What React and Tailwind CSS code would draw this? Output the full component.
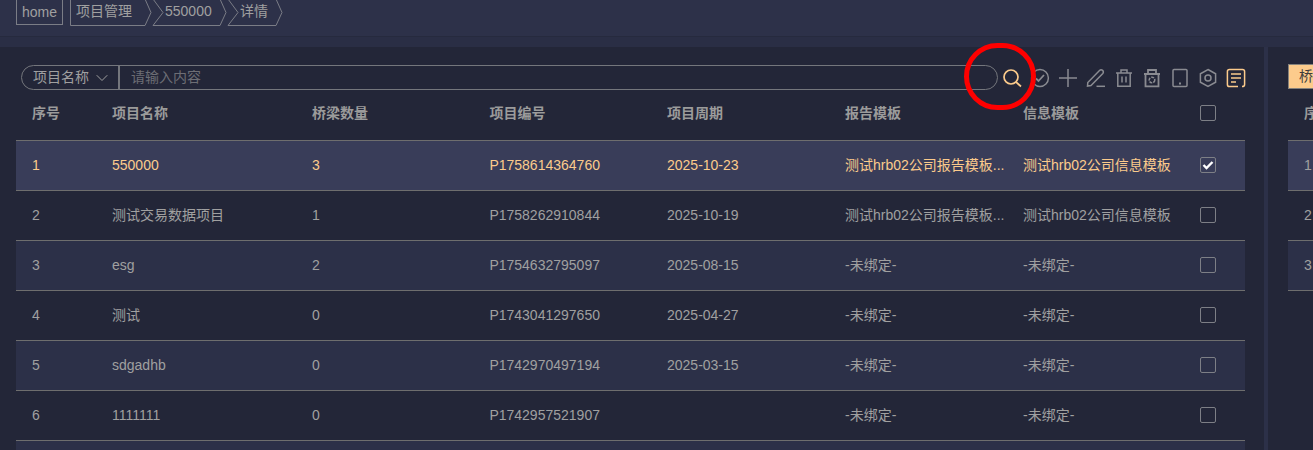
import React from 'react';
import { ChevronDown } from 'lucide-react';

const rows = [
  { no: 1, name: '550000', count: 3, code: 'P1758614364760', date: '2025-10-23', report: '测试hrb02公司报告模板...', info: '测试hrb02公司信息模板', active: true },
  { no: 2, name: '测试交易数据项目', count: 1, code: 'P1758262910844', date: '2025-10-19', report: '测试hrb02公司报告模板...', info: '测试hrb02公司信息模板' },
  { no: 3, name: 'esg', count: 2, code: 'P1754632795097', date: '2025-08-15', report: '-未绑定-', info: '-未绑定-' },
  { no: 4, name: '测试', count: 0, code: 'P1743041297650', date: '2025-04-27', report: '-未绑定-', info: '-未绑定-' },
  { no: 5, name: 'sdgadhb', count: 0, code: 'P1742970497194', date: '2025-03-15', report: '-未绑定-', info: '-未绑定-' },
  { no: 6, name: '1111111', count: 0, code: 'P1742957521907', date: '', report: '-未绑定-', info: '-未绑定-' },
];

const gridCols = 'grid grid-cols-[80px_200px_177.4px_177.6px_178px_178px_178px_59px]';

// outline of a breadcrumb tag, notch on the left when it follows another tag
const Crumb = ({ children, width, notch }) => (
  <div className="relative h-[26px] shrink-0" style={{ width }}>
    <svg className="absolute inset-0" width={width} height="26" fill="none" stroke="#7b7d86">
      <path d={`M${notch ? 1 : 0.5} -1 L${notch ? 11 : 0.5} ${notch ? 12.5 : 25} L${notch ? 1 : 0.5} 25.5 H${width - 7} L${width - 1} 12.5 L${width - 7} -1`} />
    </svg>
    <span className={`relative block leading-[22px] text-[14px] text-[#a0a0a0] ${notch ? 'pl-[13px]' : 'pl-[6px]'}`}>{children}</span>
  </div>
);

const Checkbox = ({ checked }) => (
  <div className="w-4 h-4 mb-px border border-[#7d7f86] rounded-[2px] flex items-center justify-center">
    {checked && (
      <svg width="12" height="10" viewBox="0 0 12 10" fill="none" stroke="#fff" strokeWidth="2.4">
        <path d="M1.5 5 L4.5 8 L10.5 2" />
      </svg>
    )}
  </div>
);

const ToolIcon = ({ children, color = '#8a8b91' }) => (
  <svg width="20" height="20" viewBox="0 0 20 20" fill="none" stroke={color} strokeWidth="1.5" className="shrink-0">
    {children}
  </svg>
);

const Toolbar = () => (
  <div className="flex items-center ml-1 gap-2">
    <ToolIcon color="#fccb8c">
      <circle cx="9" cy="9" r="7" strokeWidth="1.7" />
      <path d="M14 14 L19 18.5" strokeWidth="1.7" />
    </ToolIcon>
    <ToolIcon>
      <circle cx="10" cy="10" r="8.4" />
      <path d="M6 10.5 L8.5 13 L14 7" strokeWidth="1.8" />
    </ToolIcon>
    <ToolIcon>
      <path d="M10 1 V19 M1 10 H19" />
    </ToolIcon>
    <ToolIcon>
      <path d="M1.8 14.5 L1.5 18 L5 17.5 L16.8 5.5 Q18 3.8 16.6 2.4 Q15 1 13.5 2.5 Z" />
      <path d="M10.5 18.3 H19" />
    </ToolIcon>
    <ToolIcon>
      <path d="M2 5 H18 M7 5 V2 H13 V5 M3.8 5 V18.3 H16.2 V5 M8 8.5 V14.5 M12 8.5 V14.5" />
    </ToolIcon>
    <ToolIcon>
      <path d="M2 6 H18 M6 6 V2 H14 V6" strokeWidth="1.8" />
      <path d="M3.5 6 V18.3 H16.5 V6" strokeWidth="1.8" />
      <circle cx="10" cy="12" r="2.8" strokeDasharray="3 1" />
    </ToolIcon>
    <ToolIcon>
      <rect x="3" y="1.5" width="14" height="17" rx="1" />
      <path d="M9 15.5 H11" strokeWidth="2" />
    </ToolIcon>
    <ToolIcon>
      <path d="M10 1.5 L17.6 5.8 V14.2 L10 18.5 L2.4 14.2 V5.8 Z" />
      <circle cx="10" cy="10" r="3" />
    </ToolIcon>
    <ToolIcon color="#fccb8c">
      <path d="M12 18.6 H3.5 Q1.4 18.6 1.4 16.5 V3.5 Q1.4 1.4 3.5 1.4 H16.5 Q18.6 1.4 18.6 3.5 V16.5 Q18.6 18.6 16 18.6" />
      <path d="M5 6 H15 M5 10 H15 M5 14 H10" strokeWidth="1.6" />
    </ToolIcon>
  </div>
);

const App = () => {
  return (
    <div className="relative w-[1313px] h-[450px] overflow-hidden bg-[#2c3048] text-[14px] antialiased font-['Liberation_Sans','Noto_Sans_CJK_SC',sans-serif]">
      {/* Breadcrumb */}
      <div className="h-[36px] flex pl-4 bg-[#2d3149]">
        <div className="w-[47px] h-[26px] -mt-px border border-[#7b7d86] pl-[5px] leading-[24px] text-[#a0a0a0] shrink-0">home</div>
        <div className="w-[7px] shrink-0" />
        <Crumb width={82}>项目管理</Crumb>
        <Crumb width={75} notch>550000</Crumb>
        <Crumb width={56} notch>详情</Crumb>
      </div>
      <div className="h-[11px] bg-[#2a2e45] border-t border-[#262a3e]" />

      <div className="flex h-[403px]">
        {/* Project list */}
        <div className="w-[1264px] shrink-0 bg-[#232638] pl-4 pt-[18px]">
          <div className="flex items-center w-[1230px] h-[25px] pl-[5px]">
            <div className="flex flex-1 h-[25px] border border-[#74767c] rounded-full">
              <div className="w-[98px] shrink-0 flex items-center pl-[11px] border-r-2 border-[#74767c] text-[#a0a0a0]">
                项目名称
                <ChevronDown size={20} className="ml-[3px]" strokeWidth={1.2} />
              </div>
              <div className="pl-[11px] leading-[23px] text-[#6d6e75]">请输入内容</div>
            </div>
            <Toolbar />
          </div>

          <div className="w-[1229px]">
            <div className={`${gridCols} h-[51px] pb-[3px] font-bold text-[#9b9b9b] items-center border-b border-[#6e6e6e]`}>
              {['序号', '项目名称', '桥梁数量', '项目编号', '项目周期', '报告模板', '信息模板'].map((h) => (
                <div key={h} className="pl-4">{h}</div>
              ))}
              <div className="pl-[15px]"><Checkbox /></div>
            </div>
            {rows.map((r) => (
              <div
                key={r.no}
                className={`${gridCols} h-[50px] items-center border-b border-[#6e6e6e] ${
                  r.active ? 'bg-[#393d59] text-[#fccb8c]' : r.no % 2 ? 'bg-[#2c3048] text-[#a0a0a0]' : 'text-[#a0a0a0]'
                }`}
              >
                <div className="pl-4">{r.no}</div>
                <div className="pl-4">{r.name}</div>
                <div className="pl-4">{r.count}</div>
                <div className="pl-4">{r.code}</div>
                <div className="pl-4">{r.date}</div>
                <div className="pl-4 whitespace-nowrap">{r.report}</div>
                <div className="pl-4 whitespace-nowrap">{r.info}</div>
                <div className="pl-[15px]"><Checkbox checked={r.active} /></div>
              </div>
            ))}
            <div className="h-[10px] bg-[#2c3048]" />
          </div>
        </div>

        <div className="w-1 shrink-0 bg-[#2c3048]" />

        {/* Bridge list, cut off by the window edge */}
        <div className="flex-1 bg-[#232638] pl-5 pt-[17px] overflow-hidden">
          <div className="w-[30px] h-[25px] bg-[#fccb8c] border border-[#85827c] text-[#3d3d3d] pl-[10px] leading-[23px] whitespace-nowrap overflow-hidden">桥梁</div>
          <div className="h-[52px] pl-4 pt-[14px] font-bold text-[#9b9b9b] border-b border-[#6e6e6e] whitespace-nowrap">序</div>
          {[1, 2, 3].map((n) => (
            <div key={n} className={`h-[50px] pl-4 flex items-center border-b border-[#6e6e6e] text-[#a0a0a0] ${n === 1 ? 'bg-[#393d59]' : n === 3 ? 'bg-[#2c3048]' : ''}`}>
              {n}
            </div>
          ))}
        </div>
      </div>

      {/* Red annotation circle */}
      <div className="absolute left-[964px] top-[43px] w-[72px] h-[67px] rounded-full border-[5px] border-[#fe0000]" />
    </div>
  );
};

export default App;
